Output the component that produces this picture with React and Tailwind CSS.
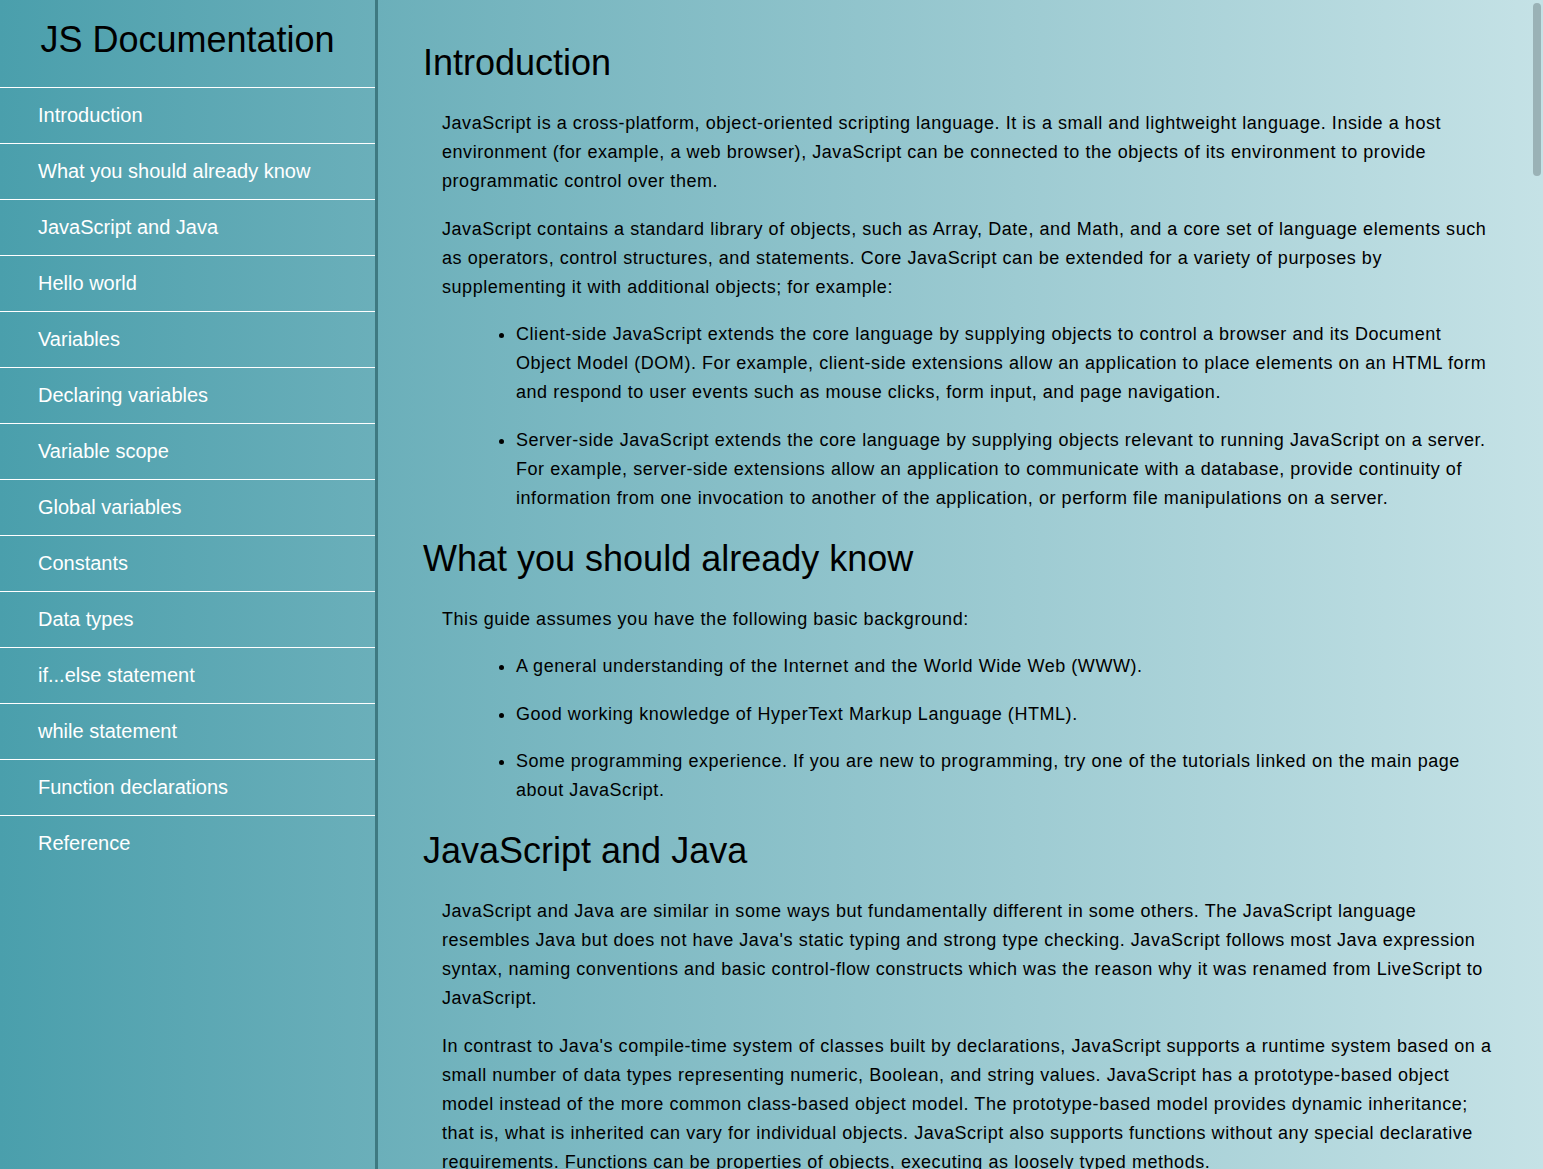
import React from "react";

const navItems = [
  "Introduction",
  "What you should already know",
  "JavaScript and Java",
  "Hello world",
  "Variables",
  "Declaring variables",
  "Variable scope",
  "Global variables",
  "Constants",
  "Data types",
  "if...else statement",
  "while statement",
  "Function declarations",
  "Reference",
];

const Heading = ({ children, first }) => (
  <h2
    className={`text-[36px] leading-[41px] font-normal text-black ${
      first ? "" : "mt-[25px]"
    }`}
  >
    {children}
  </h2>
);

const Para = ({ children, afterHeading }) => (
  <p
    className={`ml-[19px] text-[18px] leading-[29px] tracking-[0.55px] text-black ${
      afterHeading ? "mt-[26px]" : "mt-[18.5px]"
    }`}
  >
    {children}
  </p>
);

const List = ({ items }) => (
  <ul className="ml-[19px] pl-[74px] list-disc text-[18px] leading-[29px] tracking-[0.55px] text-black">
    {items.map((item, i) => (
      <li key={i} className="mt-[18.5px]">
        {item}
      </li>
    ))}
  </ul>
);

export default function App() {
  return (
    <div
      className="relative flex h-[1169px] w-full overflow-hidden bg-gradient-to-r from-[#4a9fac] to-[#c5e2e6]"
      style={{ fontFamily: '"Liberation Sans", Arial, sans-serif' }}
    >
      {/* Sidebar */}
      <nav className="w-[378px] shrink-0 border-r-[3px] border-[#3e7981]">
        <header className="h-[87px] pt-[19px] text-center">
          <h1 className="text-[36px] leading-[41px] font-normal text-black">
            JS Documentation
          </h1>
        </header>
        <ul>
          {navItems.map((item) => (
            <li key={item}>
              <a
                href="#"
                className="flex h-[56px] items-center border-t border-white pl-[38px] text-[20px] leading-[23px] text-white"
              >
                {item}
              </a>
            </li>
          ))}
        </ul>
      </nav>

      {/* Main content */}
      <main className="flex-1 px-[45px] pt-[42px]">
        <section>
          <Heading first>Introduction</Heading>
          <Para afterHeading>
            JavaScript is a cross-platform, object-oriented scripting language. It is a small
            and lightweight language. Inside a host environment (for example, a web browser),
            JavaScript can be connected to the objects of its environment to provide
            programmatic control over them.
          </Para>
          <Para>
            JavaScript contains a standard library of objects, such as Array, Date, and Math,
            and a core set of language elements such as operators, control structures, and
            statements. Core JavaScript can be extended for a variety of purposes by
            supplementing it with additional objects; for example:
          </Para>
          <List
            items={[
              "Client-side JavaScript extends the core language by supplying objects to control a browser and its Document Object Model (DOM). For example, client-side extensions allow an application to place elements on an HTML form and respond to user events such as mouse clicks, form input, and page navigation.",
              "Server-side JavaScript extends the core language by supplying objects relevant to running JavaScript on a server. For example, server-side extensions allow an application to communicate with a database, provide continuity of information from one invocation to another of the application, or perform file manipulations on a server.",
            ]}
          />
        </section>

        <section>
          <Heading>What you should already know</Heading>
          <Para afterHeading>This guide assumes you have the following basic background:</Para>
          <List
            items={[
              "A general understanding of the Internet and the World Wide Web (WWW).",
              "Good working knowledge of HyperText Markup Language (HTML).",
              "Some programming experience. If you are new to programming, try one of the tutorials linked on the main page about JavaScript.",
            ]}
          />
        </section>

        <section>
          <Heading>JavaScript and Java</Heading>
          <Para afterHeading>
            JavaScript and Java are similar in some ways but fundamentally different in some
            others. The JavaScript language resembles Java but does not have Java's static
            typing and strong type checking. JavaScript follows most Java expression syntax,
            naming conventions and basic control-flow constructs which was the reason why it
            was renamed from LiveScript to JavaScript.
          </Para>
          <Para>
            In contrast to Java's compile-time system of classes built by declarations,
            JavaScript supports a runtime system based on a small number of data types
            representing numeric, Boolean, and string values. JavaScript has a prototype-based
            object model instead of the more common class-based object model. The
            prototype-based model provides dynamic inheritance; that is, what is inherited can
            vary for individual objects. JavaScript also supports functions without any
            special declarative requirements. Functions can be properties of objects,
            executing as loosely typed methods.
          </Para>
        </section>
      </main>

      {/* Scrollbar thumb */}
      <div className="absolute right-[2px] top-[3px] h-[173px] w-[8px] rounded-full bg-[#9ab2b6]" />
    </div>
  );
}
